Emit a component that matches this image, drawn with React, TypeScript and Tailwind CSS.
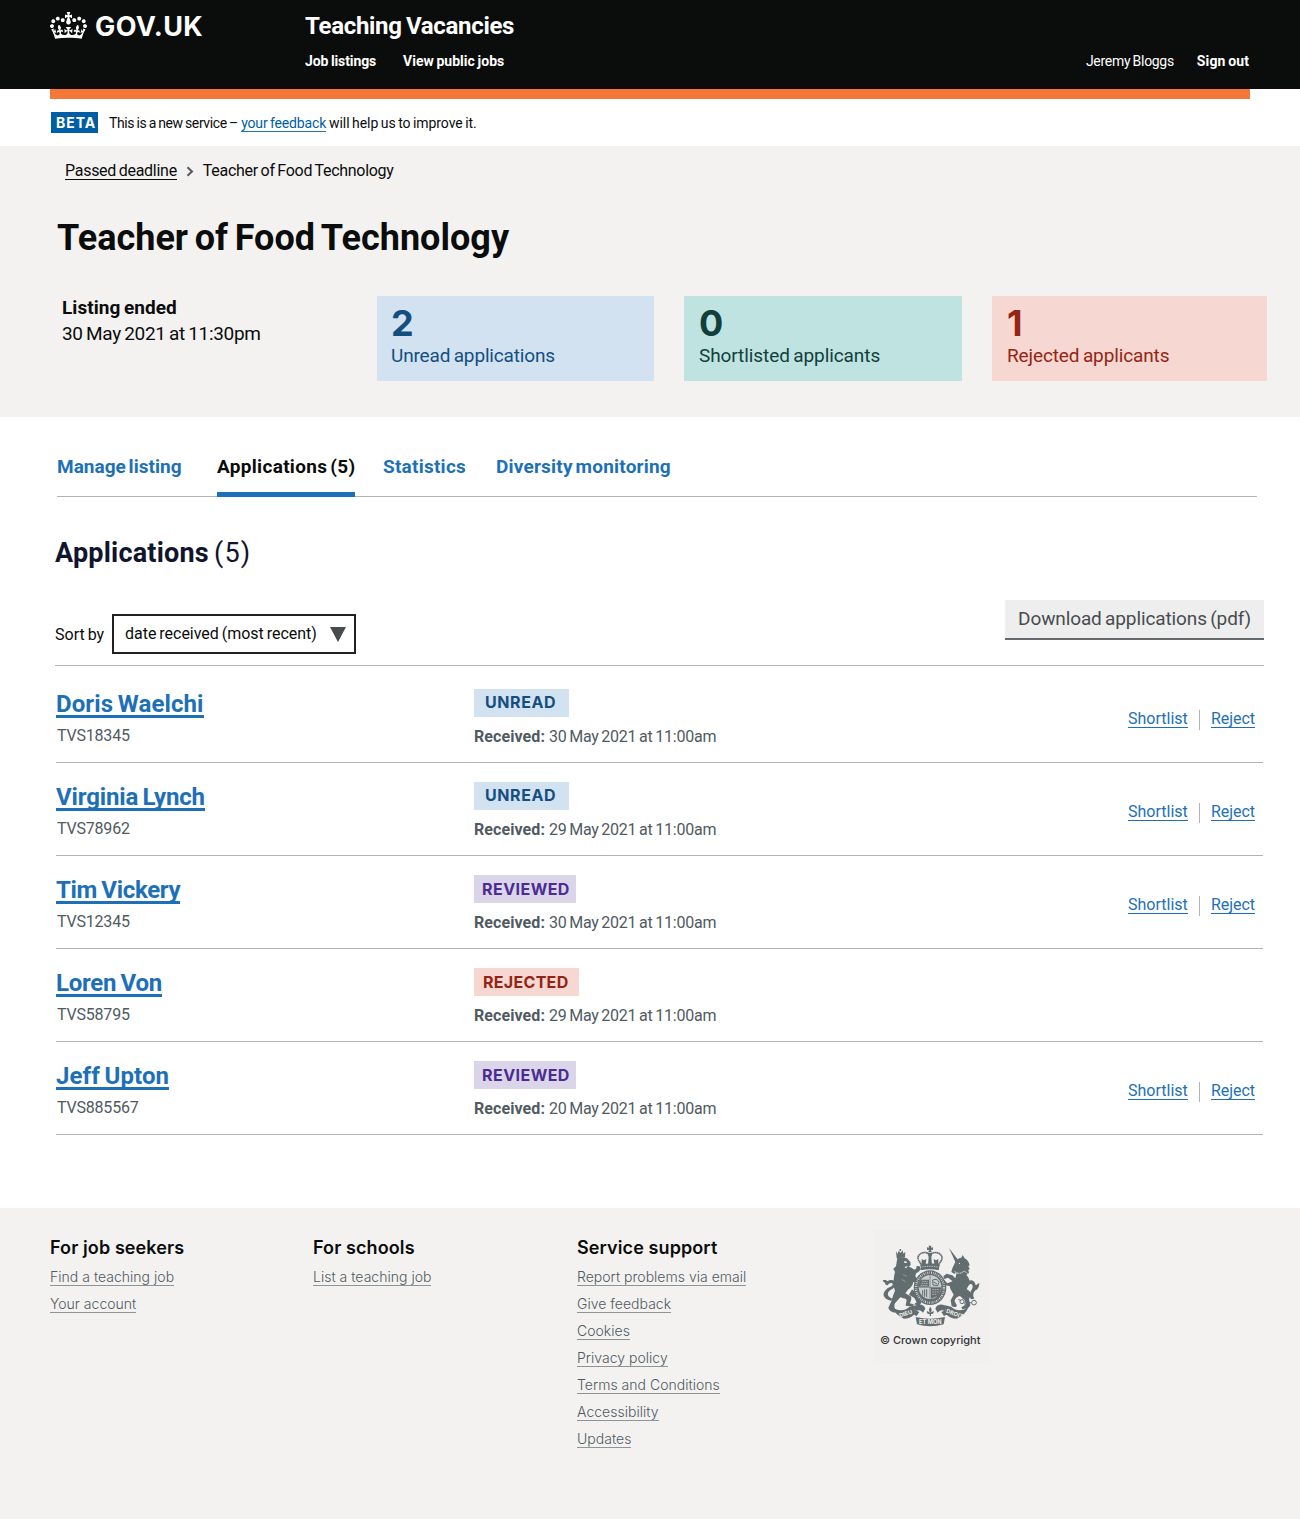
import React from 'react';

const body = "font-['Roboto',sans-serif]";
const inter = "font-['Inter',sans-serif]";

function Crown() {
  return (
    <svg className="h-[27px] w-[37px] shrink-0" viewBox="0 0 132 97" preserveAspectRatio="none" fill="#fff" aria-hidden="true">
      <path
        fillRule="evenodd"
        d="M25 30.2c3.5 1.5 7.7-.2 9.1-3.7 1.5-3.6-.2-7.8-3.9-9.2-3.6-1.4-7.6.3-9.1 3.9-1.4 3.5.3 7.5 3.9 9zM9 39.5c3.6 1.5 7.8-.2 9.2-3.7 1.5-3.6-.2-7.8-3.9-9.1-3.6-1.5-7.6.2-9.1 3.8-1.4 3.5.3 7.5 3.8 9zM4.4 57.2c3.5 1.5 7.7-.2 9.1-3.8 1.5-3.6-.2-7.7-3.9-9.1-3.5-1.5-7.6.3-9.1 3.8-1.4 3.5.3 7.6 3.9 9.1zm38.3-21.4c3.5 1.5 7.7-.2 9.1-3.8 1.5-3.6-.2-7.7-3.9-9.1-3.6-1.5-7.6.3-9.1 3.8-1.3 3.6.4 7.7 3.9 9.1zm64.4-5.6c-3.6 1.5-7.8-.2-9.1-3.7-1.5-3.6.2-7.8 3.8-9.2 3.6-1.4 7.7.3 9.2 3.9 1.3 3.5-.4 7.5-3.9 9zm15.9 9.3c-3.6 1.5-7.7-.2-9.1-3.7-1.5-3.6.2-7.8 3.7-9.1 3.6-1.5 7.7.2 9.2 3.8 1.5 3.5-.3 7.5-3.8 9zm4.7 17.7c-3.6 1.5-7.8-.2-9.2-3.8-1.5-3.6.2-7.7 3.9-9.1 3.6-1.5 7.7.3 9.2 3.8 1.3 3.5-.4 7.6-3.9 9.1zM89.3 35.8c-3.6 1.5-7.8-.2-9.2-3.8-1.4-3.6.2-7.7 3.9-9.1 3.6-1.5 7.7.3 9.2 3.8 1.4 3.6-.3 7.7-3.9 9.1zM69.7 17.7l8.9 4.7V9.3l-8.9 2.8c-.2-.3-.5-.6-.9-.9L72.4 0H59.6l3.5 11.2c-.3.3-.6.5-.9.9l-8.8-2.8v13.1l8.8-4.7c.3.3.6.7.9.9l-5 15.4v.1c-.2.8-.4 1.6-.4 2.4 0 4.1 3.1 7.5 7 8.1h.2c.3 0 .7.1 1 .1.4 0 .7 0 1-.1h.2c4-.6 7.1-4.1 7.1-8.1 0-.8-.1-1.7-.4-2.4V34l-5.1-15.4c.4-.2.7-.6 1-.9zM66 92.8c16.9 0 32.8 1.1 47.1 3.2 4-16.9 8.9-26.7 14-33.5l-9.6-3.4c1 4.9 1.1 7.2 0 10.2-1.5-1.4-3-4.3-4.2-8.7L108.6 76c2.8-2 5-3.2 7.5-3.3-4.4 9.4-10 11.9-13.6 11.2-4.3-.8-6.3-4.6-5.6-7.9 1-4.7 5.7-5.9 8-.5 4.3-8.7-3-11.4-7.6-8.8 7.1-7.2 7.9-13.5 2.1-21.1-8 6.1-8.1 12.3-4.5 20.8-4.7-5.4-12.1-2.5-9.5 6.2 3.4-5.2 7.9-2 7.2 3.1-.6 4.3-6.4 7.8-13.5 7.2-10.3-.9-10.9-8-11.2-13.8 2.5-.5 7.1 1.8 11 7.3L80.2 60c-4.1 4.4-8 5.3-12.3 5.4 1.4-4.4 8-11.6 8-11.6H55.5s6.4 7.2 7.9 11.6c-4.2-.1-8-1-12.3-5.4l1.4 16.4c3.9-5.5 8.5-7.7 10.9-7.3-.3 5.8-.9 12.8-11.1 13.8-7.2.6-12.9-2.9-13.5-7.2-.7-5 3.8-8.3 7.1-3.1 2.7-8.7-4.6-11.6-9.4-6.2 3.7-8.5 3.6-14.7-4.6-20.8-5.8 7.6-5 13.9 2.2 21.1-4.7-2.6-11.9.1-7.7 8.8 2.3-5.5 7.1-4.2 8.1.5.7 3.3-1.3 7.1-5.7 7.9-3.5.7-9-1.8-13.5-11.2 2.5.1 4.7 1.3 7.5 3.3l-4.7-15.4c-1.2 4.4-2.7 7.2-4.3 8.7-1.1-3-.9-5.3 0-10.2l-9.5 3.4c5 6.9 9.9 16.7 14 33.5 14.8-2.1 30.8-3.2 47.7-3.2z"
      />
    </svg>
  );
}

function RoyalArms() {
  return (
    <svg className="h-[90px] w-[102px]" viewBox="2 0 306 270" fill="#626d70" aria-hidden="true">
      {/* lion */}
      <path d="M50 34l5 8 3-10 6 7 6-8 2 10 6-6-1 17-25 3z" />
      <circle cx="63" cy="30" r="3" />
      <path d="M54 54c10-4 26-3 31 3l8 9 1 9-6 5c12 3 19 10 22 20l-2 8 5 8 9-3c5 1 6 6 3 9l-16 6-7-2c-2 11-8 18-15 22l-9 12 16 9c4 6 1 14-3 21l12 3-2 7-22-3c1-9 5-16 1-20l-17-5-16 18c-3 7-2 13 0 17l8 6-8 5c-12-2-18-8-20-15l7-15c5-13 8-25 13-35-7-19-4-42 0-57l-5-10 8-7z" />
      <path d="M98 148l16 14 12 26-6 9-16-4 8-6-7-13-16-10zM88 94l22-7 2-9 9 1 4 9-8 8-26 15z" />
      <path d="M34 182C10 176 8 160 20 149c10-9 20-9 20-16 0-6-11-5-15 3l-6-2c-2-8-7-7-9-13 7-2 12 0 14 3 9-7 25-6 25 8 0 13-17 16-22 25-4 8 1 16 13 19z" />
      <path d="M75 63l8 2-1 4-8-1zM86 78l-6 7-5-4z" fill="#f1f0ef" />
      <path d="M71 104l12 5M67 118l12 7" stroke="#b9bebf" strokeWidth="1.5" />
      {/* unicorn */}
      <path d="M209 24l28 37-9 5z" />
      <path d="M229 64c5-6 11-11 17-11l4-8 6 10c8 4 13 12 15 21l-4 2 4 9-4 3 2 9-8 6c7 6 10 14 9 23-2 9-6 15-8 20 10 4 14 11 12 19l-5 11 4 18c-4 8-12 11-24 12l-3-6 13-8-2-12-15-14c-9 2-16 9-16 16l7 13-5 5-11-3-3-18 9-17-10-18-2-8-16-2-9-13 8-3 10 10 16-6-14-11-11 4-3-8 10-8 17 5 9 9 4-17-8 3-8-5 3-11z" />
      <path d="M275 178c-10-18 3-26 5-37 1-9-8-13-12-4l-7-5c2-9 14-15 22-8 5 3 3 9 7 12l10-8c-1 13-3 19-12 23-6 7-9 14-3 25z" />
      <path d="M226 95l10 5 10-1 9-6 10 8" fill="none" stroke="#f1f0ef" strokeWidth="2.5" strokeDasharray="6 2" />
      <circle cx="240" cy="70" r="2" fill="#f1f0ef" />
      <g fill="none" stroke="#626d70" strokeWidth="3">
        <circle cx="248" cy="185" r="6" />
        <circle cx="263" cy="190" r="7" />
        <circle cx="284" cy="188" r="7" />
        <path d="M237 178l8 4M270 189l7-1" />
      </g>
      {/* crown over the shield */}
      <path d="M148 17h8l-1 6 6-1v8l-6-1 2 8h-10l2-8-6 1v-8l6 1z" />
      <path d="M150 43c-9-10-31-6-34 9-1 8 6 14 11 24h50c5-10 12-16 11-24-3-15-25-19-34-9" fill="none" stroke="#626d70" strokeWidth="5" strokeDasharray="5 1" />
      <path d="M144 39h16l-4 12 2 24h-12l2-24zM127 57l7 4 7-4-2 16-12 3zM177 57l-7 4-7-4 2 16 12 3z" />
      <path d="M123 74c18-5 40-5 58 0l-3 17c-16-4-36-4-52 0z" />
      <path d="M129 81c15-3 31-3 46 0" stroke="#f1f0ef" strokeWidth="2" strokeDasharray="4 3" fill="none" />
      {/* garter and quartered shield */}
      <ellipse cx="152" cy="143" rx="49" ry="52" />
      <ellipse cx="152" cy="143" rx="42" ry="45" fill="none" stroke="#e2e3e2" strokeWidth="7" strokeDasharray="2.5 3.5 1.5 4" />
      <ellipse cx="152" cy="141" rx="34" ry="36" fill="#c9cdcd" />
      <path d="M124 119h25v21h-31q0-12 6-21zM155 143h30q-1 16-10 25l-20 8z" fill="#626d70" />
      <path d="M128 124h17M126 130h20M124 136h22M159 149h20M159 156h19M159 163h14" stroke="#d5d8d8" strokeWidth="2" strokeDasharray="5 2" />
      <path d="M152 106v70M118 142h68" stroke="#626d70" strokeWidth="2" />
      <path d="M160 120q15-6 19 7l-4 10-14-2zM163 126l10 6M130 150v17M136 148v22M142 148v23" fill="none" stroke="#626d70" strokeWidth="3" />
      {/* motto ribbon */}
      <path d="M38 200c18 14 37 14 53 0l18-4-3 14 14 6-8 12-8-4c-8 8-18 12-30 12-18-8-30-20-36-36z" />
      <path d="M268 200c-18 14-37 14-53 0l-18-4 3 14-14 6 8 12 8-4c8 8 18 12 30 12 18-8 30-20 36-36z" />
      <path d="M104 200c12-10 30-8 34 6l-7 12c-6-8-14-10-22-4zM202 200c-12-10-30-8-34 6l7 12c6-8 14-10 22-4z" />
      <path d="M109 231q44 10 88 0l-4 22q-40 12-80 0z" />
      <path d="M153 200q-8 10 0 18l-10-5q-2 10 8 9v6h4v-6q10 1 8-9l-10 5q8-8 0-18z" />
      <g fill="#f1f0ef" fontFamily="Inter, sans-serif" fontWeight="700" textAnchor="middle">
        <text x="79" y="227" fontSize="17" transform="rotate(-18 79 221)">DIEU</text>
        <text x="153" y="251" fontSize="17">ET MON</text>
        <text x="226" y="227" fontSize="17" transform="rotate(20 226 221)">DROIT</text>
      </g>
    </svg>
  );
}

type Status = 'unread' | 'reviewed' | 'rejected';

const tags: Record<Status, { label: string; className: string }> = {
  unread: { label: 'UNREAD', className: 'w-[95px] pl-[11px] leading-[27px] tracking-[0.6px] bg-[#d2e2f1] text-[#144e81]' },
  reviewed: { label: 'REVIEWED', className: 'w-[102px] pl-[8px] leading-[29px] tracking-[0.45px] bg-[#dbd5e9] text-[#4c2c92]' },
  rejected: { label: 'REJECTED', className: 'w-[105px] pl-[9px] leading-[29px] tracking-[0.3px] bg-[#f6d7d2] text-[#942514]' },
};

const applicants: { name: string; track: string; code: string; status: Status; date: string }[] = [
  { name: 'Doris Waelchi', track: 'tracking-[0.1px]', code: 'TVS18345', status: 'unread', date: '30 May 2021 at 11:00am' },
  { name: 'Virginia Lynch', track: 'tracking-[-0.14px]', code: 'TVS78962', status: 'unread', date: '29 May 2021 at 11:00am' },
  { name: 'Tim Vickery', track: 'tracking-[-0.31px]', code: 'TVS12345', status: 'reviewed', date: '30 May 2021 at 11:00am' },
  { name: 'Loren Von', track: 'tracking-[-0.25px]', code: 'TVS58795', status: 'rejected', date: '29 May 2021 at 11:00am' },
  { name: 'Jeff Upton', track: 'tracking-[0.09px]', code: 'TVS885567', status: 'reviewed', date: '20 May 2021 at 11:00am' },
];

const stats = [
  { value: '2', label: 'Unread applications', className: 'w-[277px] bg-[#d2e2f1] text-[#144e81] pl-[14px]', track: 'tracking-[-0.16px]' },
  { value: '0', label: 'Shortlisted applicants', className: 'w-[278px] bg-[#bfe3e0] text-[#10403c] pl-[15px]', track: 'tracking-[-0.09px]' },
  { value: '1', label: 'Rejected applicants', className: 'w-[275px] bg-[#f6d7d2] text-[#942514] pl-[15px]', track: 'tracking-[-0.12px]' },
];

const footerColumns = [
  { title: 'For job seekers', width: 'w-[263px]', links: ['Find a teaching job', 'Your account'] },
  { title: 'For schools', width: 'w-[264px]', links: ['List a teaching job'] },
  {
    title: 'Service support',
    width: 'w-[296px]',
    links: ['Report problems via email', 'Give feedback', 'Cookies', 'Privacy policy', 'Terms and Conditions', 'Accessibility', 'Updates'],
  },
];

function Header() {
  return (
    <header className="flex h-[89px] bg-[#0b0c0c] px-[50px] text-white">
      <div className={`flex w-[255px] items-start pt-[12px] ${inter}`}>
        <Crown />
        <span className="ml-[8px] text-[27px] font-bold leading-[30px] tracking-[0.4px]">GOV.UK</span>
      </div>
      <div className="flex-1 pt-[11px]">
        <div className="text-[24px] font-bold leading-[30px] tracking-[-0.3px] [word-spacing:-1.4px]">Teaching Vacancies</div>
        <nav className="mt-[10px] flex text-[14px] leading-[20px]">
          <a className="w-[98px] font-bold tracking-[-0.1px] [word-spacing:-0.8px]">Job listings</a>
          <a className="font-bold tracking-[0.02px] [word-spacing:-0.8px]">View public jobs</a>
          <a className="ml-auto tracking-[-0.3px] [word-spacing:-0.8px]">Jeremy Bloggs</a>
          <a className="ml-[23px] mr-px font-bold tracking-[0.1px] [word-spacing:-0.8px]">Sign out</a>
        </nav>
      </div>
    </header>
  );
}

function PhaseBanner() {
  return (
    <div className="h-[57px] px-[50px]">
      <div className="h-[10px] bg-[#f47738]" />
      <div className="mt-[13px] flex h-[21px] pl-px text-[14px] leading-[22px]">
        <span className={`h-[21px] w-[47px] bg-[#005ea5] pl-[5px] font-bold tracking-[1px] text-white ${inter}`}>BETA</span>
        <span className="ml-[11px] whitespace-pre tracking-[-0.38px] [word-spacing:-0.8px]">This is a new service – </span>
        <a className="ml-px mt-[3px] h-[17px] border-b border-[#2672b0] leading-[16px] tracking-[-0.16px] text-[#005ea5] [word-spacing:-0.8px]">your feedback</a>
        <span className="ml-[3px] tracking-[-0.08px] [word-spacing:-0.8px]">will help us to improve it.</span>
      </div>
    </div>
  );
}

function Summary() {
  return (
    <section className="h-[271px] bg-[#f3f2f1]">
      <div className="flex h-[35px] items-start pl-[65px] pt-[16px] text-[16px] [word-spacing:-1px]">
        <a className="h-[18px] border-b border-[#0b0c0c] leading-[18px] tracking-[-0.28px]">Passed deadline</a>
        <svg className="ml-[9px] mt-[4px] h-[11px] w-[8px]" viewBox="0 0 8 11" fill="none" stroke="#505a5f" strokeWidth="2">
          <path d="M1.5 1.2L6 5.5 1.5 9.8" />
        </svg>
        <span className="ml-[9px] leading-[18px] tracking-[-0.29px]">Teacher of Food Technology</span>
      </div>
      <h1 className="ml-[57px] mt-[34px] text-[36px] font-bold leading-[46px] tracking-[0.02px] [word-spacing:-2.3px]">Teacher of Food Technology</h1>
      <div className="mt-[33px] flex h-[87px] pt-[2px]">
        <div className="w-[377px] pl-[62px] text-[19px] [word-spacing:-1.1px]">
          <div className="font-bold leading-[24px] tracking-[0.05px]">Listing ended</div>
          <div className="mt-[2px] leading-[24px] tracking-[-0.31px]">30 May 2021 at 11:30pm</div>
        </div>
        <div className="flex gap-[30px]">
          {stats.map((s) => (
            <div key={s.value} className={`h-[85px] shrink-0 ${s.className}`}>
              <div className={`pt-[7px] text-[36px] font-bold leading-[40px] ${inter}`}>{s.value}</div>
              <div className={`mt-[2px] text-[19px] leading-[22px] [word-spacing:-1.1px] ${s.track}`}>{s.label}</div>
            </div>
          ))}
        </div>
      </div>
    </section>
  );
}

function Tabs() {
  return (
    <nav className="ml-[57px] mt-[30px] flex h-[50px] w-[1200px] border-b border-[#b1b4b6] text-[19px] font-bold leading-[40px] text-[#1d70b8] [word-spacing:-2px]">
      <a className="w-[160px] tracking-[0.02px]">Manage listing</a>
      <a className="h-[50px] w-[138px] whitespace-nowrap border-b-[5px] border-[#1d70b8] tracking-[0.31px] text-[#0b0c0c]">Applications (5)</a>
      <a className="ml-[28px] w-[113px] tracking-[0.24px]">Statistics</a>
      <a className="tracking-[0.2px]">Diversity monitoring</a>
    </nav>
  );
}

function Toolbar() {
  return (
    <div className="ml-[55px] mt-[31px] flex h-[66px] w-[1209px] items-start border-b border-[#b1b4b6]">
      <span className="mt-[25px] w-[57px] text-[16px] leading-[20px] text-[#0b0c0c] [word-spacing:-1px]">Sort by</span>
      <div className="mt-[14px] flex h-[40px] w-[244px] items-center border-2 border-[#212121] pl-[11px] text-[16px] text-[#0b0c0c]">
        <span className="tracking-[-0.02px] [word-spacing:-1px]">date received (most recent)</span>
        <svg className="ml-auto mr-[8px] h-[15px] w-[16px]" viewBox="0 0 16 15" fill="#484c4e">
          <path d="M0 0h16L8 15z" />
        </svg>
      </div>
      <button className="ml-auto h-[40px] w-[259px] border-b-2 border-[#666a6c] bg-[#eeeeee] text-[19px] leading-[38px] tracking-[-0.12px] text-[#484c4e] [word-spacing:-1.2px]">
        Download applications (pdf)
      </button>
    </div>
  );
}

function ApplicantList() {
  return (
    <ul className="ml-[56px] mt-[4px] w-[1207px]">
      {applicants.map((a) => (
        <li key={a.name} className="flex h-[93px] border-b border-[#b1b4b6] text-[16px] text-[#505a5f]">
          <div className="flex w-[418px] flex-col items-start pt-[22px]">
            <a className={`h-[26px] border-b-[3px] border-[#1d70b8] text-[24px] font-bold leading-[24px] text-[#1d70b8] [word-spacing:-1.4px] ${a.track}`}>{a.name}</a>
            <span className="ml-px mt-[8px] leading-[20px] tracking-[-0.2px]">{a.code}</span>
          </div>
          <div className="pt-[19px]">
            <div className={`h-[28px] text-[16px] font-bold ${inter} ${tags[a.status].className}`}>{tags[a.status].label}</div>
            <div className="mt-[10px] flex leading-[20px]">
              <b className="mr-[4px] font-bold tracking-[0.08px]">Received:</b>
              <span className="tracking-[-0.24px] [word-spacing:-1px]">{a.date}</span>
            </div>
          </div>
          {a.status !== 'rejected' && (
            <div className="ml-auto mr-[8px] mt-[40px] flex h-[20px] leading-[17px] text-[#1d70b8]">
              <a className="h-[18px] w-[60px] border-b border-[#1d70b8]">Shortlist</a>
              <span className="ml-[11px] mr-[11px] h-[20px] w-px bg-[#b1b4b6]" />
              <a className="h-[18px] w-[44px] border-b border-[#1d70b8] tracking-[-0.04px]">Reject</a>
            </div>
          )}
        </li>
      ))}
    </ul>
  );
}

function Footer() {
  return (
    <footer className={`mt-[73px] flex h-[311px] bg-[#f3f2f1] pl-[50px] ${inter}`}>
      {footerColumns.map((c) => (
        <div key={c.title} className={`pt-[29px] ${c.width}`}>
          <h2 className="text-[18px] font-semibold leading-[22px] tracking-[0.1px] text-[#0b0c0c]">{c.title}</h2>
          <ul className="mt-[9px] text-[14px] font-light text-[#505a5f]">
            {c.links.map((l) => (
              <li key={l} className="flex h-[27px]">
                <a className="h-[18px] border-b border-[#8f9496] leading-[18px] tracking-[0.02px]">{l}</a>
              </li>
            ))}
          </ul>
        </div>
      ))}
      <div className="mt-[22px] flex h-[134px] w-[118px] flex-col bg-[#f1f0ef] pl-[7px] pt-[10px]">
        <RoyalArms />
        <span className="mt-px whitespace-nowrap text-[11px] font-medium leading-[19px] text-[#303436]">© Crown copyright</span>
      </div>
    </footer>
  );
}

export default function App() {
  return (
    <div className={`h-[1519px] w-[1300px] overflow-hidden bg-white text-[#0b0c0c] ${body}`}>
      <Header />
      <PhaseBanner />
      <Summary />
      <Tabs />
      <h2 className="ml-[55px] mt-[40px] flex h-[32px] text-[27px] leading-[33px] text-[#11142d]">
        <span className="w-[159px] font-bold tracking-[0.2px]">Applications</span>
        <span className="tracking-[1.2px]">(5)</span>
      </h2>
      <Toolbar />
      <ApplicantList />
      <Footer />
    </div>
  );
}
